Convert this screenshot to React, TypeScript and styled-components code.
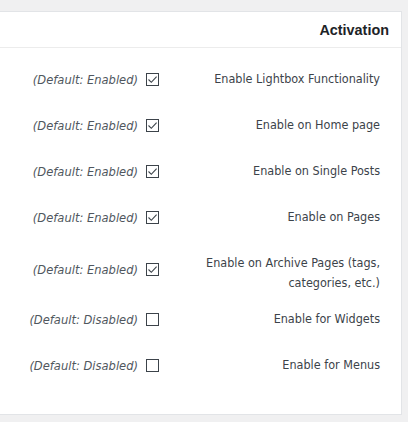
import styled, { createGlobalStyle } from "styled-components";

const GlobalStyle = createGlobalStyle`
  html, body {
    margin: 0;
    padding: 0;
    background: #f0f0f1;
  }
  body {
    font-family: "DejaVu Sans Condensed", "DejaVu Sans", sans-serif;
  }
`;

const Page = styled.div`
  width: 408px;
  height: 422px;
  padding: 11px 6px 0 0;
  box-sizing: border-box;
  overflow: hidden;
`;

const Panel = styled.div`
  margin-left: -1px;
  width: 403px;
  height: 404px;
  box-sizing: border-box;
  background: #fff;
  border: 1px solid #e2e4e7;
`;

const Header = styled.div`
  height: 35px;
  display: flex;
  align-items: center;
  justify-content: flex-end;
  padding-right: 12px;
  border-bottom: 1px solid #ececec;
  font-family: "Liberation Sans", Arial, sans-serif;
  font-weight: bold;
  font-size: 14.4px;
  color: #1d2327;
`;

const List = styled.div`
  padding-top: 8px;
`;

const Row = styled.div<{ $tall?: boolean }>`
  display: grid;
  grid-template-columns: 159px 1fr;
  align-items: center;
  height: ${(p) => (p.$tall ? 56 : 46)}px;
  padding-top: ${(p) => (p.$tall ? 3 : 0)}px;
  padding-right: 21px;
  box-sizing: border-box;
`;

const Control = styled.div`
  display: flex;
  align-items: center;
  justify-content: flex-end;
  gap: 8px;
`;

const Default = styled.span`
  font-style: italic;
  font-size: 12.8px;
  color: #50575e;
`;

const Box = styled.span`
  width: 13px;
  height: 13px;
  box-sizing: border-box;
  border: 1px solid #3c434a;
  background: #fff;
  display: inline-flex;
  align-items: center;
  justify-content: center;
`;

const Label = styled.div<{ $tall?: boolean }>`
  text-align: right;
  font-size: 12.5px;
  line-height: 20px;
  color: #3c434a;
  padding-left: 32px;
  margin-top: ${(p) => (p.$tall ? 6 : 0)}px;
`;

const Check = () => (
  <svg width="11" height="11" viewBox="0 0 11 11">
    <path d="M1.5 5.5 L4.3 8.3 L9.6 2.6" fill="none" stroke="#3c434a" strokeWidth="1.1" />
  </svg>
);

const rows = [
  { label: "Enable Lightbox Functionality", on: true },
  { label: "Enable on Home page", on: true },
  { label: "Enable on Single Posts", on: true },
  { label: "Enable on Pages", on: true },
  { label: "Enable on Archive Pages (tags, categories, etc.)", on: true, tall: true },
  { label: "Enable for Widgets", on: false },
  { label: "Enable for Menus", on: false },
];

export default function App() {
  return (
    <Page>
      <GlobalStyle />
      <Panel>
        <Header>Activation</Header>
        <List>
          {rows.map((r) => (
            <Row key={r.label} $tall={r.tall}>
              <Control>
                <Default>(Default: {r.on ? "Enabled" : "Disabled"})</Default>
                <Box>{r.on && <Check />}</Box>
              </Control>
              <Label $tall={r.tall}>{r.label}</Label>
            </Row>
          ))}
        </List>
      </Panel>
    </Page>
  );
}
